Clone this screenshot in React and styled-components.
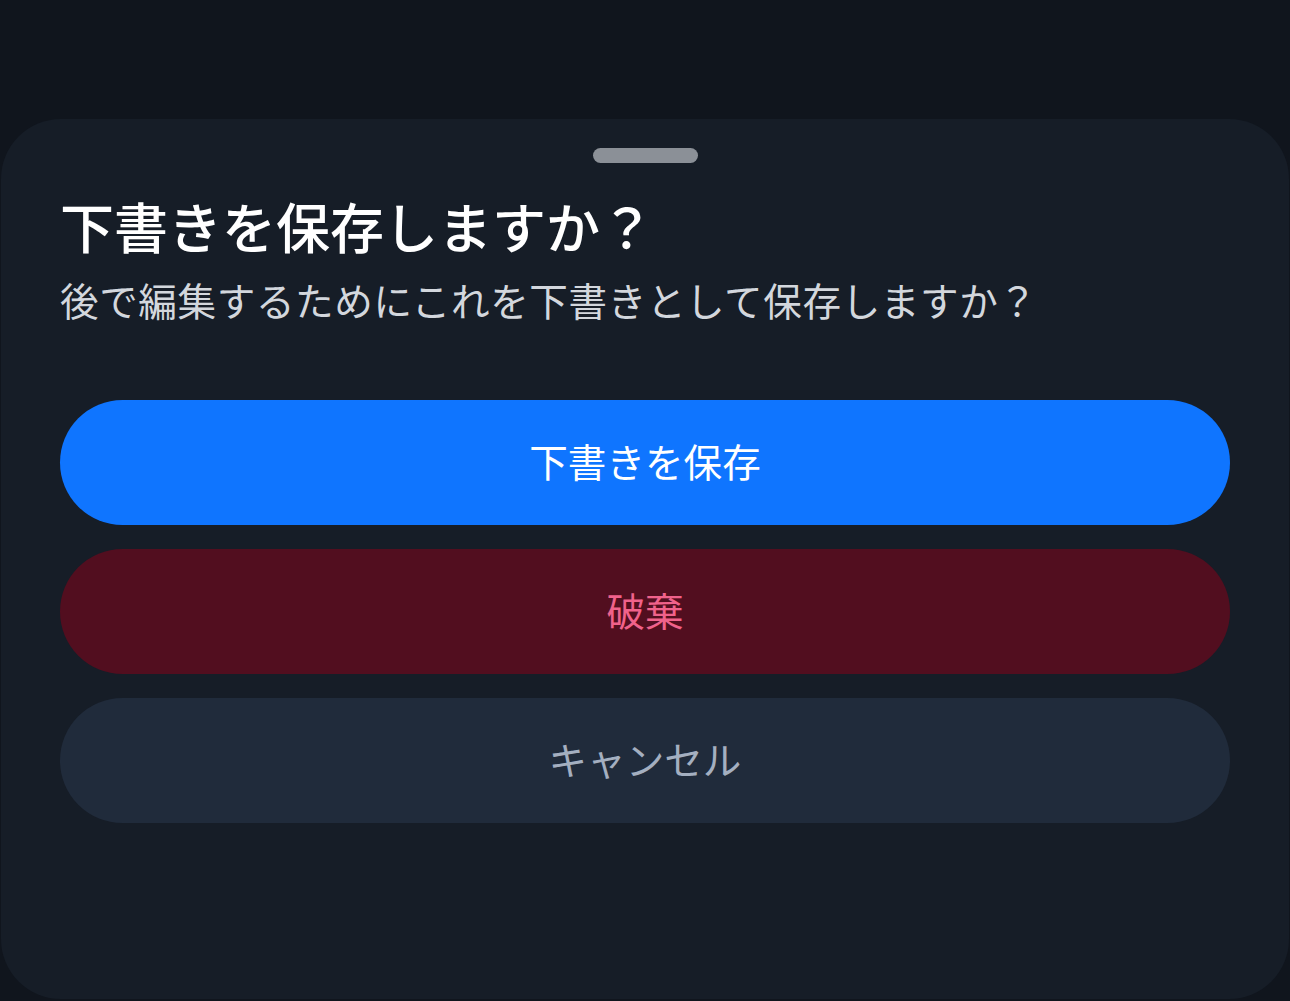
import React from "react";
import styled, { createGlobalStyle } from "styled-components";

const GlobalStyle = createGlobalStyle`
  html, body {
    margin: 0;
    padding: 0;
    background: #10151d;
  }
  body {
    font-family: "Noto Sans CJK JP", "Noto Sans", sans-serif;
  }
`;

const Page = styled.div`
  width: 1290px;
  height: 1001px;
  box-sizing: border-box;
  padding: 119px 1px 2px;
  background: #10151d;
`;

const Sheet = styled.div`
  height: 100%;
  box-sizing: border-box;
  background: #161d27;
  border-radius: 60px;
  padding: 29px 59px 0;
  display: flex;
  flex-direction: column;
`;

const Handle = styled.div`
  align-self: center;
  width: 105px;
  height: 15px;
  border-radius: 8px;
  background: #8b9097;
`;

const Title = styled.h1`
  margin: 30px 0 0;
  font-size: 54px;
  line-height: 65px;
  font-weight: 500;
  color: #ffffff;
`;

const Subtitle = styled.p`
  margin: 18px 0 0;
  font-size: 38.6px;
  line-height: 47px;
  letter-spacing: 0.6px;
  font-weight: 400;
  color: #d3d7dd;
`;

const Actions = styled.div`
  margin-top: 77px;
  display: flex;
  flex-direction: column;
  gap: 24px;
`;

const variants = {
  primary: { bg: "#0f75ff", fg: "#ffffff" },
  danger: { bg: "#520e1f", fg: "#f0628b" },
  cancel: { bg: "#202b3b", fg: "#a4afc0" },
};

const ActionButton = styled.button`
  height: 125px;
  width: 100%;
  border: none;
  border-radius: 63px;
  padding: 0 0 6px;
  background: ${(p) => variants[p.$variant].bg};
  color: ${(p) => variants[p.$variant].fg};
  font-family: "Noto Sans CJK JP", "Noto Sans", sans-serif;
  font-size: 38.6px;
  font-weight: 400;
  display: flex;
  align-items: center;
  justify-content: center;
  cursor: pointer;
`;

export default function App() {
  return (
    <>
      <GlobalStyle />
      <Page>
        <Sheet>
          <Handle />
          <Title>下書きを保存しますか？</Title>
          <Subtitle>後で編集するためにこれを下書きとして保存しますか？</Subtitle>
          <Actions>
            <ActionButton $variant="primary">下書きを保存</ActionButton>
            <ActionButton $variant="danger">破棄</ActionButton>
            <ActionButton $variant="cancel">キャンセル</ActionButton>
          </Actions>
        </Sheet>
      </Page>
    </>
  );
}
